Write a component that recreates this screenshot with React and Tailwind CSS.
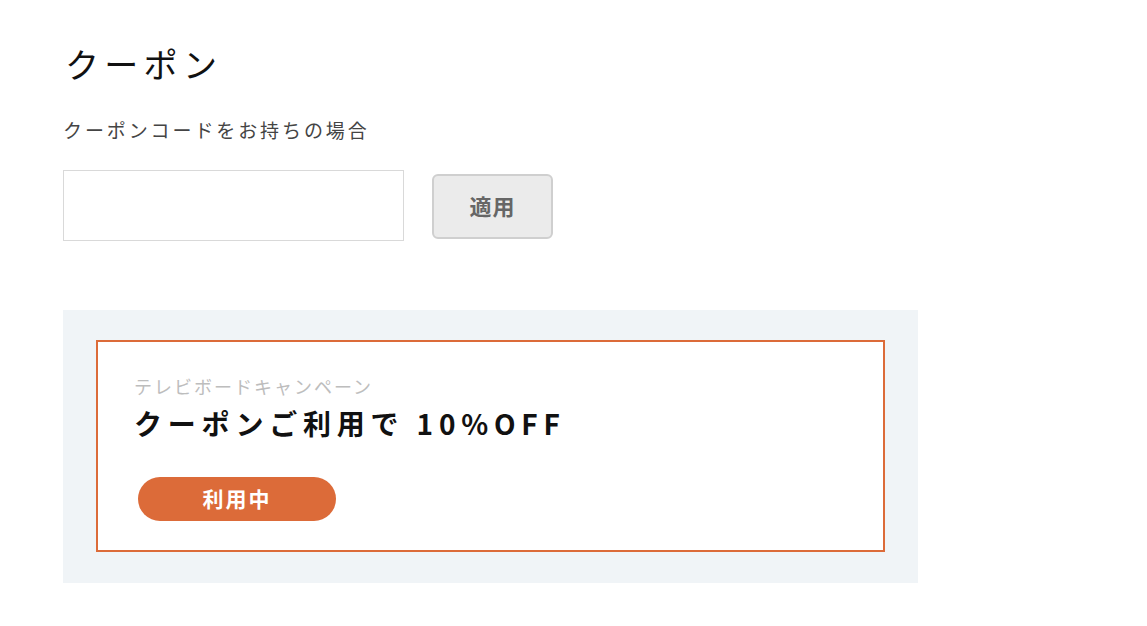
export default function App() {
  const font = { fontFamily: '"Noto Sans CJK JP", "Noto Sans", sans-serif' };
  return (
    <div className="min-h-[626px] w-full bg-white pl-[63px] pt-[41px]" style={font}>
      <h1 className="text-[34px] leading-[46px] tracking-[5.3px] text-[#111] font-normal pl-[2px]">クーポン</h1>
      <p className="mt-[29px] text-[19px] leading-[28px] tracking-[2.9px] text-[#444]">クーポンコードをお持ちの場合</p>
      <div className="mt-[26px] flex items-center gap-[28px]">
        <input type="text" className="w-[341px] h-[71px] border border-[#d9d9d9] bg-white outline-none px-3" />
        <button className="w-[121px] h-[65px] mt-[2px] rounded-[6px] border-2 border-[#cfcfcf] bg-[#ebebeb] text-[22px] leading-[30px] pb-[3px] font-bold text-[#666] tracking-[1px]">適用</button>
      </div>
      <div className="mt-[69px] w-[855px] h-[273px] bg-[#f0f4f7] px-[33px] pt-[30px]">
        <div className="h-[212px] border-2 border-[#dc6b39] bg-white pl-[36px] pt-[31px]">
          <p className="text-[18px] leading-[26px] tracking-[2px] text-[#bdbdbd]">テレビボードキャンペーン</p>
          <p className="mt-[5px] text-[28px] leading-[38px] font-bold tracking-[5.8px] text-[#111]">クーポンご利用で 10%OFF</p>
          <div className="mt-[35px] ml-[4px] w-[198px] h-[44px] rounded-full bg-[#dc6b39] flex items-center justify-center text-white text-[21px] leading-[28px] pb-[2px] font-bold tracking-[2px]">利用中</div>
        </div>
      </div>
    </div>
  );
}
